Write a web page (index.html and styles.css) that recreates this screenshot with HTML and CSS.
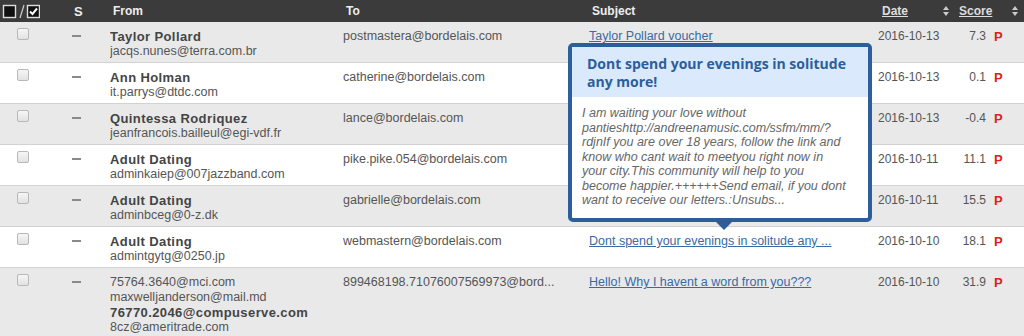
FILE: index.html
```html
<!DOCTYPE html>
<html lang="en">
<head>
    <meta charset="UTF-8">
    <title>Messages</title>
    <link rel="stylesheet" href="styles.css">
</head>
<body>
    <div class="mail-list">
        <div class="list-head">
            <div class="head-cell select-all">
                <svg width="40" height="16" viewBox="0 0 40 16">
                    <rect x="3.5" y="2.5" width="12" height="12" fill="#111" stroke="#ddd" stroke-width="1.4"/>
                    <path d="M24 2 L20 15" stroke="#ccc" stroke-width="1.2"/>
                    <rect x="27.5" y="2.5" width="12" height="12" fill="#111" stroke="#ddd" stroke-width="1.4"/>
                    <path d="M30 8.5 L32.5 11 L37 5.5" fill="none" stroke="#fff" stroke-width="2"/>
                </svg>
            </div>
            <div class="head-cell head-s">S</div>
            <div class="head-cell">From</div>
            <div class="head-cell">To</div>
            <div class="head-cell">Subject</div>
            <div class="head-cell sortable"><a href="#">Date</a><span class="sort-icon"></span></div>
            <div class="head-cell sortable"><a href="#">Score</a><span class="sort-icon"></span></div>
        </div>

        <div class="mail-row odd">
            <div class="cell"><span class="check"></span></div>
            <div class="cell"><span class="dash"></span></div>
            <div class="cell from"><div class="name">Taylor Pollard</div><div class="addr">jacqs.nunes@terra.com.br</div></div>
            <div class="cell to">postmastera@bordelais.com</div>
            <div class="cell subject"><a href="#">Taylor Pollard voucher</a></div>
            <div class="cell date">2016-10-13</div>
            <div class="cell score">7.3</div>
            <div class="cell flag">P</div>
        </div>

        <div class="mail-row">
            <div class="cell"><span class="check"></span></div>
            <div class="cell"><span class="dash"></span></div>
            <div class="cell from"><div class="name">Ann Holman</div><div class="addr">it.parrys@dtdc.com</div></div>
            <div class="cell to">catherine@bordelais.com</div>
            <div class="cell subject"></div>
            <div class="cell date">2016-10-13</div>
            <div class="cell score">0.1</div>
            <div class="cell flag">P</div>
        </div>

        <div class="mail-row odd">
            <div class="cell"><span class="check"></span></div>
            <div class="cell"><span class="dash"></span></div>
            <div class="cell from"><div class="name">Quintessa Rodriquez</div><div class="addr">jeanfrancois.bailleul@egi-vdf.fr</div></div>
            <div class="cell to">lance@bordelais.com</div>
            <div class="cell subject"></div>
            <div class="cell date">2016-10-13</div>
            <div class="cell score">-0.4</div>
            <div class="cell flag">P</div>
        </div>

        <div class="mail-row">
            <div class="cell"><span class="check"></span></div>
            <div class="cell"><span class="dash"></span></div>
            <div class="cell from"><div class="name">Adult Dating</div><div class="addr">adminkaiep@007jazzband.com</div></div>
            <div class="cell to">pike.pike.054@bordelais.com</div>
            <div class="cell subject"></div>
            <div class="cell date">2016-10-11</div>
            <div class="cell score">11.1</div>
            <div class="cell flag">P</div>
        </div>

        <div class="mail-row odd">
            <div class="cell"><span class="check"></span></div>
            <div class="cell"><span class="dash"></span></div>
            <div class="cell from"><div class="name">Adult Dating</div><div class="addr">adminbceg@0-z.dk</div></div>
            <div class="cell to">gabrielle@bordelais.com</div>
            <div class="cell subject"></div>
            <div class="cell date">2016-10-11</div>
            <div class="cell score">15.5</div>
            <div class="cell flag">P</div>
        </div>

        <div class="mail-row">
            <div class="cell"><span class="check"></span></div>
            <div class="cell"><span class="dash"></span></div>
            <div class="cell from"><div class="name">Adult Dating</div><div class="addr">admintgytg@0250.jp</div></div>
            <div class="cell to">webmastern@bordelais.com</div>
            <div class="cell subject"><a href="#">Dont spend your evenings in solitude any ...</a></div>
            <div class="cell date">2016-10-10</div>
            <div class="cell score">18.1</div>
            <div class="cell flag">P</div>
        </div>

        <div class="mail-row odd tall">
            <div class="cell"><span class="check"></span></div>
            <div class="cell"><span class="dash"></span></div>
            <div class="cell from">
                <div class="addr">75764.3640@mci.com</div>
                <div class="addr">maxwelljanderson@mail.md</div>
                <div class="name">76770.2046@compuserve.com</div>
                <div class="addr">8cz@ameritrade.com</div>
            </div>
            <div class="cell to">899468198.71076007569973@bord...</div>
            <div class="cell subject"><a href="#">Hello! Why I havent a word from you???</a></div>
            <div class="cell date">2016-10-10</div>
            <div class="cell score">31.9</div>
            <div class="cell flag">P</div>
        </div>

        <div class="preview">
            <div class="preview-title">Dont spend your evenings in solitude any more!</div>
            <div class="preview-body">I am waiting your love without pantieshttp://andreenamusic.com/ssfm/mm/?rdjnIf you are over 18 years, follow the link and know who cant wait to meetyou right now in your city.This community will help to you become happier.++++++Send email, if you dont want to receive our letters.:Unsubs...</div>
        </div>
    </div>
</body>
</html>
```

FILE: styles.css
```css
body {
    margin: 0;
    background-color: #e9e9e9;
    font-family: "Liberation Sans", Arial, sans-serif;
    font-size: 12.5px;
    color: #555;
}

.mail-list {
    position: relative;
    width: 1024px;
}

.list-head {
    display: grid;
    grid-template-columns: 55px 55px 233px 246px 289px 77px 69px;
    height: 22px;
    align-items: center;
    background-color: #3b3b3b;
    color: #eee;
    font-weight: bold;
    font-size: 12px;
}

.head-cell {
    padding-left: 3px;
}

.select-all {
    padding-left: 0;
    display: flex;
}

.head-s {
    padding-left: 19px;
    font-size: 13px;
}

.sortable {
    display: flex;
    align-items: center;
    justify-content: space-between;
    padding-left: 4px;
    padding-right: 6px;
}

.sortable a {
    color: #ddd;
    text-decoration: underline;
}

.sort-icon {
    display: inline-block;
    width: 6px;
    height: 10px;
    position: relative;
}

.sort-icon::before,
.sort-icon::after {
    content: '';
    position: absolute;
    left: 0;
    border-left: 3px solid transparent;
    border-right: 3px solid transparent;
}

.sort-icon::before {
    top: 0;
    border-bottom: 4px solid #ccc;
}

.sort-icon::after {
    bottom: 0;
    border-top: 4px solid #ccc;
}

.mail-row {
    display: grid;
    grid-template-columns: 55px 55px 233px 246px 289px 62px 48px 36px;
    height: 40px;
    border-bottom: 1px solid #d2d2d2;
    background-color: #fff;
    line-height: 15px;
}

.mail-row.odd {
    background-color: #e9e9e9;
}

.mail-row.tall {
    height: 68px;
    border-bottom: none;
}

.cell {
    padding-top: 7px;
    white-space: nowrap;
    overflow: hidden;
}

.check {
    display: block;
    width: 10px;
    height: 10px;
    margin: -1px 0 0 17px;
    border: 1px solid #b8b8b8;
    border-radius: 2px;
    background: linear-gradient(#f6f6f6, #e2e2e2);
}

.dash {
    display: block;
    width: 9px;
    height: 2px;
    margin: 6px 0 0 17px;
    background-color: #8a8a8a;
}

.name {
    font-weight: bold;
    font-size: 13px;
    letter-spacing: 0.4px;
    color: #444;
}

.addr {
    color: #555;
}

.to {
    color: #555;
}

.subject a {
    color: #3a6aa3;
    text-decoration: underline;
}

.date {
    font-size: 12px;
    color: #555;
}

.score {
    font-size: 12px;
    text-align: right;
    padding-right: 2px;
    color: #555;
}

.flag {
    padding-left: 6px;
    color: #e0201c;
    font-weight: bold;
    font-size: 13px;
}

.preview {
    position: absolute;
    left: 568px;
    top: 43px;
    width: 296px;
    height: 171px;
    border: 4px solid #2b5e9b;
    border-radius: 5px;
    background-color: #fff;
}

.preview::after {
    content: '';
    position: absolute;
    left: 144px;
    bottom: -12px;
    border-left: 8px solid transparent;
    border-right: 8px solid transparent;
    border-top: 8px solid #2b5e9b;
}

.preview-title {
    height: 36px;
    padding: 8px 10px 6px 15px;
    background-color: #dae9fb;
    color: #2c5e9c;
    font-family: "Open Sans", sans-serif;
    font-weight: bold;
    font-size: 14px;
    line-height: 18px;
}

.preview-body {
    padding: 9px 19px 0 10px;
    color: #666;
    font-style: italic;
    line-height: 14.5px;
}
```
